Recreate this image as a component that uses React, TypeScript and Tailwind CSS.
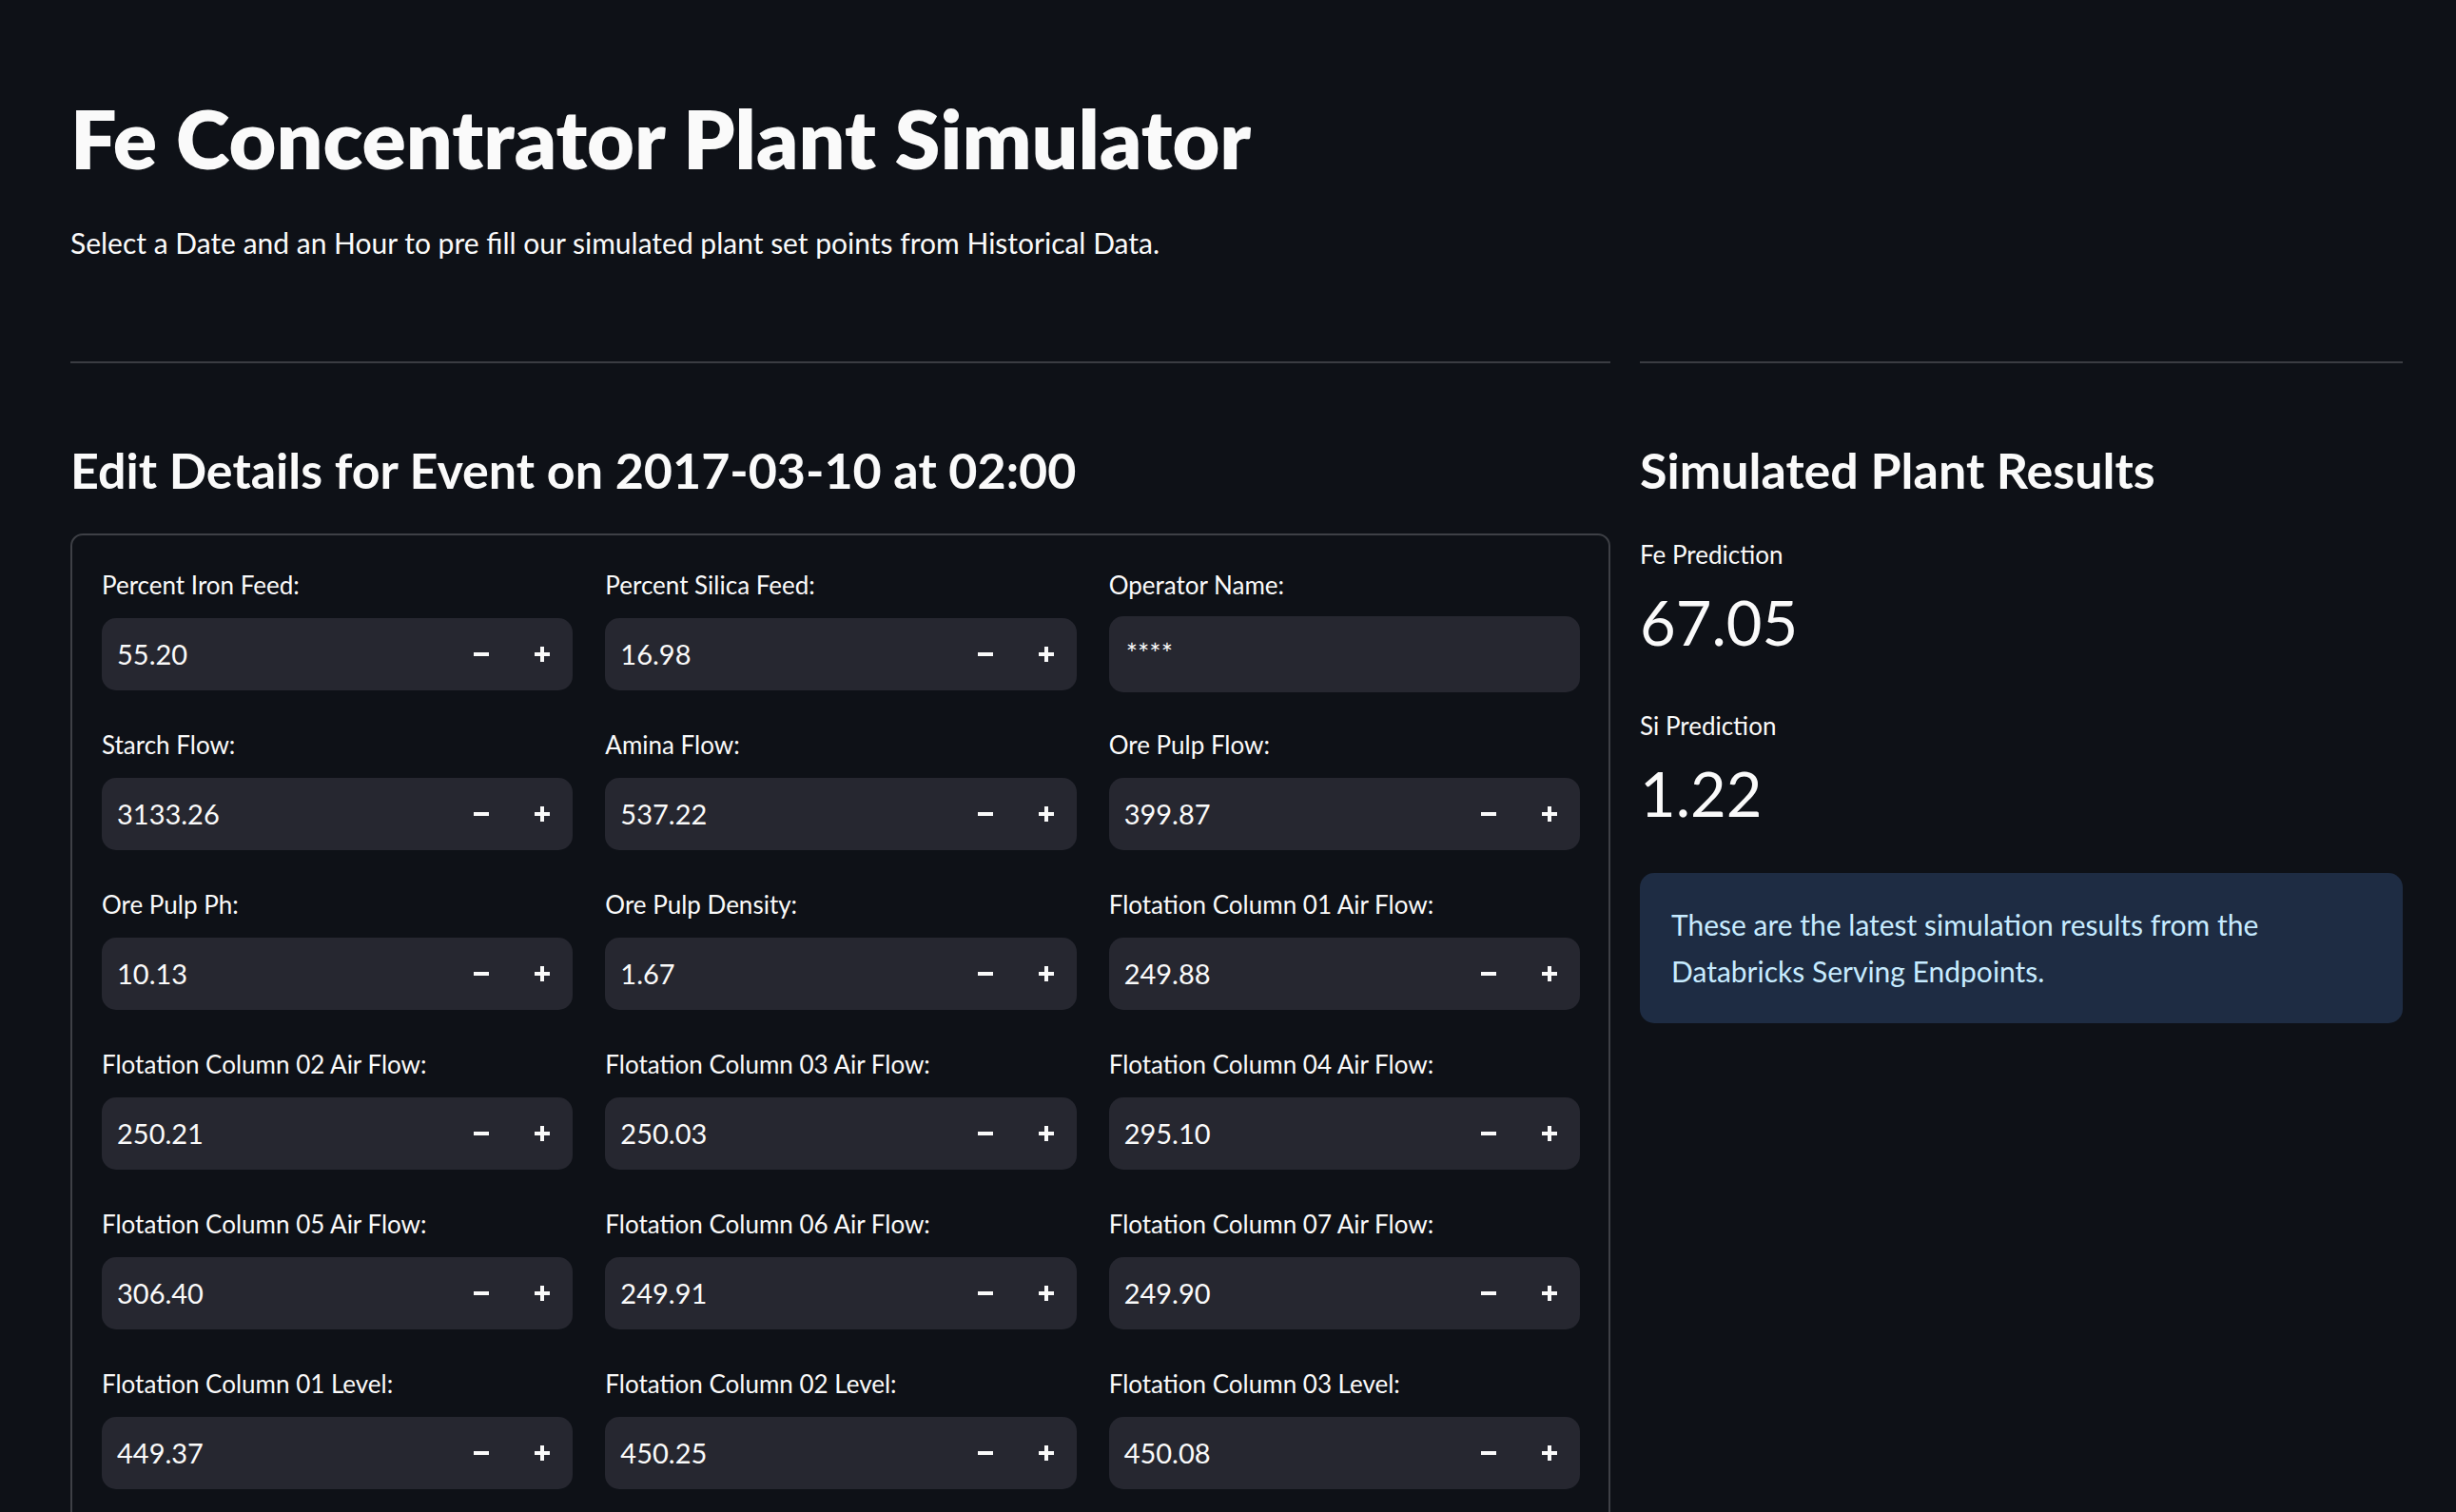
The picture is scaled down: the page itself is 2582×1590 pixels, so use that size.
import React from 'react'

type Field = { label: string; value: string; text?: boolean }

const fields: Field[] = [
  { label: 'Percent Iron Feed:', value: '55.20' },
  { label: 'Percent Silica Feed:', value: '16.98' },
  { label: 'Operator Name:', value: '****', text: true },
  { label: 'Starch Flow:', value: '3133.26' },
  { label: 'Amina Flow:', value: '537.22' },
  { label: 'Ore Pulp Flow:', value: '399.87' },
  { label: 'Ore Pulp Ph:', value: '10.13' },
  { label: 'Ore Pulp Density:', value: '1.67' },
  { label: 'Flotation Column 01 Air Flow:', value: '249.88' },
  { label: 'Flotation Column 02 Air Flow:', value: '250.21' },
  { label: 'Flotation Column 03 Air Flow:', value: '250.03' },
  { label: 'Flotation Column 04 Air Flow:', value: '295.10' },
  { label: 'Flotation Column 05 Air Flow:', value: '306.40' },
  { label: 'Flotation Column 06 Air Flow:', value: '249.91' },
  { label: 'Flotation Column 07 Air Flow:', value: '249.90' },
  { label: 'Flotation Column 01 Level:', value: '449.37' },
  { label: 'Flotation Column 02 Level:', value: '450.25' },
  { label: 'Flotation Column 03 Level:', value: '450.08' },
]

const Minus = () => (
  <svg width="16" height="16" viewBox="0 0 16 16" fill="#fafafa">
    <rect x="0" y="6" width="16" height="4" />
  </svg>
)

const Plus = () => (
  <svg width="16" height="16" viewBox="0 0 16 16" fill="#fafafa">
    <rect x="0" y="6" width="16" height="4" />
    <rect x="6" y="0" width="4" height="16" />
  </svg>
)

const InputCell = ({ field }: { field: Field }) => {
  return (
    <div className="flex flex-col">
      <div className="text-[26px] leading-[34px] mb-[18px] text-[#fafafa]">{field.label}</div>
      {field.text ? (
        <div className="h-[80px] -mt-[2px] -mb-[2px] rounded-[15px] bg-[#262730] flex items-center pl-[18px] text-[29px] text-[#fafafa]">
          <span className="-mt-[2px]">{field.value}</span>
        </div>
      ) : (
        <div className="h-[76px] rounded-[15px] bg-[#262730] flex items-center text-[29px] text-[#fafafa]">
          <span className="flex-1 pl-[16px]">{field.value}</span>
          <div className="w-[64px] h-full flex items-center justify-center">
            <Minus />
          </div>
          <div className="w-[64px] h-full flex items-center justify-center">
            <Plus />
          </div>
        </div>
      )}
    </div>
  )
}

const Metric = ({ label, value }: { label: string; value: string }) => (
  <div className="flex flex-col">
    <div className="text-[26px] leading-[32px]">{label}</div>
    <div className="text-[65px] leading-[78px] mt-[16px]">{value}</div>
  </div>
)

export default function App() {
  return (
    <div
      className="h-[1590px] overflow-hidden bg-[#0e1117] text-[#fafafa] pl-[74px] pr-[56px]"
      style={{ fontFamily: 'Lato, "Noto Sans", sans-serif' }}
    >
      <h1 className="pt-[95px] text-[86px] font-extrabold leading-[100px]">Fe Concentrator Plant Simulator</h1>
      <p className="mt-[41px] text-[30px] leading-[38px]">
        Select a Date and an Hour to pre fill our simulated plant set points from Historical Data.
      </p>

      <div className="flex gap-[31px] mt-[106px]">
        <div className="w-[1619px] flex flex-col">
          <div className="h-[2px] bg-[#3a3c42]" />
          <h3 className="mt-[81px] text-[52px] font-bold leading-[62px]">Edit Details for Event on 2017-03-10 at 02:00</h3>
          <div className="mt-[36px] border-2 border-[#3e4046] rounded-[13px] pt-[35px] pl-[31px] pr-[30px] pb-[40px]">
            <div className="grid grid-cols-3 gap-x-[34px] gap-y-[40px]">
              {fields.map((f) => (
                <InputCell key={f.label} field={f} />
              ))}
            </div>
          </div>
        </div>

        <div className="flex-1 flex flex-col">
          <div className="h-[2px] bg-[#3a3c42]" />
          <h3 className="mt-[81px] text-[52px] font-bold leading-[62px]">Simulated Plant Results</h3>
          <div className="mt-[42px] flex flex-col gap-[54px]">
            <Metric label="Fe Prediction" value="67.05" />
            <Metric label="Si Prediction" value="1.22" />
          </div>
          <div className="mt-[45px] rounded-[15px] bg-[#1e2c43] px-[33px] py-[30px] text-[30px] leading-[49px] text-[#c7ebff]">
            These are the latest simulation results from the
            <br />
            Databricks Serving Endpoints.
          </div>
        </div>
      </div>
    </div>
  )
}
